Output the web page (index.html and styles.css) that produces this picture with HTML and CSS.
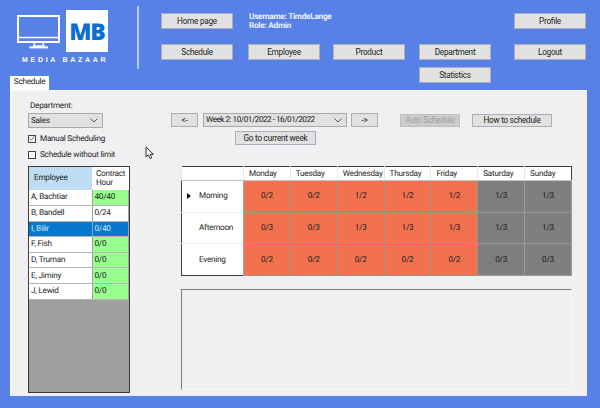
FILE: index.html
```html
<!DOCTYPE html>
<html lang="en">
<head>
    <meta charset="UTF-8">
    <meta name="viewport" content="width=device-width, initial-scale=1.0">
    <title>Media Bazaar - Schedule</title>
    <link rel="stylesheet" href="styles.css">
</head>
<body>
    <header class="top-bar">
        <div class="logo">
            <div class="logo-marks">
                <svg class="logo-monitor" width="44" height="34" viewBox="0 0 44 34">
                    <rect x="1" y="1" width="41" height="26" fill="none" stroke="#fff" stroke-width="2"/>
                    <path d="M1 22.5H42" stroke="#fff" stroke-width="1.4"/>
                    <path d="M18 27.5L16.5 31H27L25.5 27.5" fill="none" stroke="#fff" stroke-width="1.5"/>
                    <path d="M12.5 32.4H31" stroke="#fff" stroke-width="2"/>
                </svg>
                <div class="logo-box">MB</div>
            </div>
            <div class="logo-name">MEDIA BAZAAR</div>
        </div>
        <div class="divider"></div>
        <nav class="nav-grid">
            <button class="btn nav-home">Home page</button>
            <div class="user-info">Username: TimdeLange<br>Role: Admin</div>
            <button class="btn nav-profile">Profile</button>
            <button class="btn">Schedule</button>
            <button class="btn">Employee</button>
            <button class="btn">Product</button>
            <button class="btn">Department</button>
            <button class="btn">Logout</button>
            <button class="btn nav-stats">Statistics</button>
        </nav>
    </header>

    <div class="tab-strip">
        <div class="tab">Schedule</div>
    </div>

    <main class="tab-page">
        <section class="left-col">
            <label class="field-label">Department:</label>
            <div class="combo combo-dept">
                <span>Sales</span>
                <svg width="8" height="5" viewBox="0 0 8 5"><path d="M.5.5L4 4 7.5.5" fill="none" stroke="#555" stroke-width="1"/></svg>
            </div>
            <div class="check-row">
                <span class="check">
                    <svg width="9" height="9" viewBox="0 0 9 9"><path d="M1 4.5L3.5 7 8 1.5" fill="none" stroke="#333" stroke-width="1"/></svg>
                </span>
                Manual Scheduling
            </div>
            <div class="check-row check-second">
                <span class="check"></span>
                Schedule without limit
            </div>
            <div class="employee-grid">
                <table class="employee-table">
                    <tr class="emp-head">
                        <th class="emp-name-head">Employee</th>
                        <th>Contract Hour</th>
                    </tr>
                    <tr><td>A, Bachtiar</td><td class="ok">40/40</td></tr>
                    <tr><td>B, Bandell</td><td>0/24</td></tr>
                    <tr class="selected"><td>I, Bilir</td><td>0/40</td></tr>
                    <tr><td>F, Fish</td><td class="ok">0/0</td></tr>
                    <tr><td>D, Truman</td><td class="ok">0/0</td></tr>
                    <tr><td>E, Jiminy</td><td class="ok">0/0</td></tr>
                    <tr><td>J, Lewid</td><td class="ok">0/0</td></tr>
                </table>
            </div>
        </section>

        <section class="right-col">
            <div class="week-row">
                <button class="btn btn-small">&lt;-</button>
                <div class="combo combo-week">
                    <span class="week-label">Week 2: 10/01/2022 - 16/01/2022</span>
                    <svg width="8" height="5" viewBox="0 0 8 5"><path d="M.5.5L4 4 7.5.5" fill="none" stroke="#555" stroke-width="1"/></svg>
                </div>
                <button class="btn btn-small">-&gt;</button>
                <button class="btn btn-auto" disabled>Auto Schedule</button>
                <button class="btn btn-how">How to schedule</button>
            </div>
            <button class="btn btn-current">Go to current week</button>

            <table class="schedule">
                <tr class="day-head">
                    <th class="shift-col"></th>
                    <th>Monday</th><th>Tuesday</th><th>Wednesday</th><th>Thursday</th><th>Friday</th><th>Saturday</th><th>Sunday</th>
                </tr>
                <tr>
                    <td class="shift-col"><span class="row-arrow"></span>Morning</td>
                    <td class="short">0/2</td><td class="short">0/2</td><td class="short">1/2</td><td class="short">1/2</td><td class="short">1/2</td><td class="off">1/3</td><td class="off">1/3</td>
                </tr>
                <tr>
                    <td class="shift-col">Afternoon</td>
                    <td class="short">0/3</td><td class="short">0/3</td><td class="short">1/3</td><td class="short">1/3</td><td class="short">1/3</td><td class="off">1/3</td><td class="off">1/3</td>
                </tr>
                <tr>
                    <td class="shift-col">Evening</td>
                    <td class="short">0/2</td><td class="short">0/2</td><td class="short">0/2</td><td class="short">0/2</td><td class="short">0/2</td><td class="off">0/3</td><td class="off">0/3</td>
                </tr>
            </table>

            <div class="details-box"></div>
        </section>

        <svg class="cursor" width="10" height="14" viewBox="0 0 10 14">
            <path d="M1 1V11L3.4 8.8 5 12.6 6.8 11.8 5.2 8.3H8.4Z" fill="#f4f4f6" stroke="#333" stroke-width="1"/>
        </svg>
    </main>
</body>
</html>
```

FILE: styles.css
```css
* {
    box-sizing: border-box;
}
html, body {
    height: 100%;
}
body {
    margin: 0;
    background-color: #5781e6;
    font-family: Roboto, Arial, sans-serif;
    font-size: 8.2px;
    letter-spacing: -.25px;
    text-rendering: geometricPrecision;
    color: #1c1c1c;
    overflow: hidden;
}
button {
    font-family: inherit;
    font-size: inherit;
    letter-spacing: inherit;
    color: inherit;
    padding: 0;
}

/* header */
.top-bar {
    display: flex;
    height: 76px;
}
.logo {
    width: 137px;
    padding: 10px 0 0 17px;
}
.logo-marks {
    display: flex;
    align-items: flex-start;
    gap: 5px;
}
.logo-monitor {
    margin-top: 5px;
}
.logo-box {
    width: 42px;
    height: 42px;
    background-color: #fff;
    color: #0b6fd0;
    font-family: "Open Sans", Arial, sans-serif;
    font-size: 23px;
    font-weight: 800;
    line-height: 42px;
    text-align: center;
    letter-spacing: -1px;
}
.logo-name {
    margin: 4px 0 0 5px;
    color: #fff;
    font-family: "Liberation Sans", Arial, sans-serif;
    font-size: 7px;
    font-weight: 700;
    line-height: 9px;
    letter-spacing: 2.7px;
    white-space: nowrap;
}
.divider {
    width: 2px;
    height: 63px;
    margin-top: 6px;
    background-color: #b9c9f0;
}
.nav-grid {
    display: grid;
    grid-template-columns: 87px 85px 86px 95px 72px;
    grid-template-rows: 16px 15px 16px 7px 16px;
    margin: 13px 0 0 22px;
}
.nav-grid .btn {
    width: 72px;
    height: 16px;
}
.nav-grid > :nth-child(n+4) {
    grid-row: 3;
}
.nav-grid > .nav-home {
    grid-row: 1;
    grid-column: 1;
}
.nav-grid > .nav-profile {
    grid-row: 1;
    grid-column: 5;
}
.nav-grid > .nav-stats {
    grid-row: 5;
    grid-column: 4;
}
.user-info {
    grid-row: 1 / 3;
    grid-column: 2 / 5;
    padding: 0 0 0 1px;
    color: #eef2fc;
    font-weight: 700;
    line-height: 8.5px;
}
.btn {
    background-color: #e1e1e1;
    border: 1px solid #a9aeb8;
    line-height: 1;
}

/* tabs */
.tab-strip {
    display: flex;
    height: 14px;
    padding-left: 10px;
}
.tab {
    width: 39px;
    height: 14px;
    background-color: #fff;
    line-height: 13px;
    text-align: center;
    position: relative;
    z-index: 1;
}
.tab-page {
    position: relative;
    display: flex;
    width: 577px;
    height: 306px;
    margin-left: 10px;
    padding: 11px 0 0 16px;
    background-color: #f0eff2;
    border: 1px solid #f9f9fb;
    border-width: 1px 0 0 2px;
    gap: 41px;
}

/* left column */
.left-col {
    width: 102px;
}
.field-label {
    display: block;
    height: 11px;
    padding-left: 2px;
    line-height: 9px;
}
.combo {
    display: flex;
    align-items: center;
    justify-content: space-between;
    background-color: #e1e1e1;
    border: 1px solid #a9a9a9;
    padding: 0 4px 0 2px;
    white-space: nowrap;
}
.combo-dept {
    width: 75px;
    height: 15px;
}
.combo-week {
    width: 144px;
    height: 14px;
    margin: 0 4px 0 5px;
}
.week-label {
    letter-spacing: -.5px;
}
.check-row {
    display: flex;
    align-items: center;
    gap: 4px;
    height: 9px;
    margin-top: 6px;
}
.check-second {
    margin-top: 7px;
}
.check {
    display: flex;
    width: 8px;
    height: 8px;
    background-color: #f8f8f8;
    border: 1px solid #444;
    align-items: center;
    justify-content: center;
    flex: none;
}
.employee-grid {
    width: 102px;
    height: 227px;
    margin-top: 7px;
    background-color: #a09fa0;
    border: 1px solid #3c3c3c;
}
.employee-table {
    width: 100%;
    border-collapse: collapse;
    table-layout: fixed;
}
.employee-table th {
    height: 23px;
    padding: 0 2px 0 4px;
    background-color: #fff;
    font-weight: 400;
    line-height: 9px;
    text-align: left;
}
.employee-table th.emp-name-head {
    width: 63px;
    padding-left: 5px;
    background-color: #bedcf4;
}
.employee-table td {
    height: 15.6px;
    padding: 0 2px;
    background-color: #fff;
    border-bottom: 1px solid #b4b4b4;
    border-right: 1px solid #a0a0a0;
    line-height: 1;
}
.employee-table td.ok {
    background-color: #99ff8f;
}
.employee-table .selected td {
    background-color: #0678cf;
    color: #d6e8f8;
}

/* right column */
.right-col {
    width: 401px;
}
.week-row {
    display: flex;
    margin-top: 11px;
    height: 14px;
}
.btn-small {
    width: 27px;
    height: 14px;
}
.btn-auto {
    width: 60px;
    height: 13px;
    margin: 1px 0 0 22px;
    background-color: #cccccc;
    border-color: #bfbfbf;
    color: #a0a0a0;
}
.btn-how {
    width: 80px;
    height: 13px;
    margin: 1px 0 0 12px;
}
.btn-current {
    display: block;
    width: 81px;
    height: 14px;
    margin: 4px 0 0 64px;
}
.schedule {
    width: 391px;
    height: 110px;
    margin: 21px 0 0 10px;
    border-collapse: collapse;
    table-layout: fixed;
    border: 1px solid #3c3c3c;
    background-color: #fff;
}
.schedule th {
    height: 14px;
    padding: 0 0 0 5px;
    font-weight: 400;
    text-align: left;
    background-color: #fff;
    border-bottom: 1px solid #c4c4c4;
    border-left: 1px solid #e8e8e8;
}
.schedule td {
    text-align: center;
    border: 1px solid #a3948f;
}
.schedule .shift-col {
    width: 62px;
}
.schedule td.shift-col {
    position: relative;
    padding-left: 17px;
    text-align: left;
    background-color: #fff;
    border: none;
    border-top: 1px solid #eeeeee;
    border-right: 1px solid #a0a0a0;
}
.row-arrow {
    position: absolute;
    left: 5px;
    top: 12px;
    border-left: 4px solid #111;
    border-top: 3px solid transparent;
    border-bottom: 3px solid transparent;
}
.schedule td.short {
    background-color: #f47150;
}
.schedule td.off {
    background-color: #7f7e7f;
    border-color: #9a9a9a;
}
.details-box {
    width: 391px;
    height: 101px;
    margin: 13px 0 0 10px;
    border: 1px solid #f7f7f8;
    border-top-color: #7d7d7d;
    border-left-color: #7d7d7d;
}
.cursor {
    position: absolute;
    left: 133px;
    top: 55px;
}
```
